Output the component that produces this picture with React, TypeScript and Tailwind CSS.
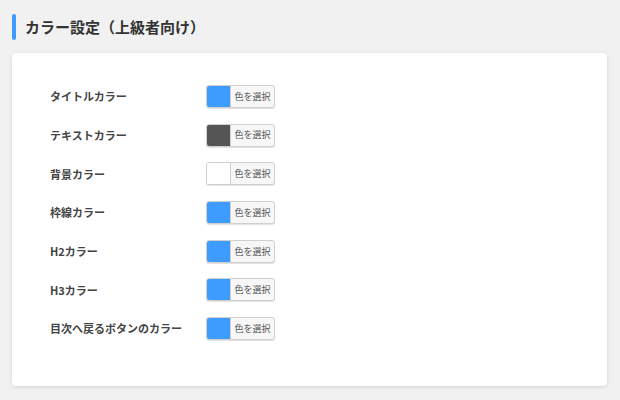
const rows = [
  { label: 'タイトルカラー', color: '#3d9cfe' },
  { label: 'テキストカラー', color: '#555555' },
  { label: '背景カラー', color: '#ffffff' },
  { label: '枠線カラー', color: '#3d9cfe' },
  { label: 'H2カラー', color: '#3d9cfe' },
  { label: 'H3カラー', color: '#3d9cfe' },
  { label: '目次へ戻るボタンのカラー', color: '#3d9cfe' },
]

function ColorButton({ color }: { color: string }) {
  return (
    <button
      type="button"
      className="flex h-[23px] w-[69px] items-stretch overflow-hidden rounded-[3px] border border-[#d0d0d0] bg-[#f7f7f7] shadow-[0_1px_0_#e3e3e3]"
    >
      <span className="w-[24px] border-r border-[#d0d0d0]" style={{ backgroundColor: color }} />
      <span className="flex flex-1 items-center justify-center text-[9px] text-[#555]">色を選択</span>
    </button>
  )
}

export default function App() {
  return (
    <div
      className="h-[400px] w-[620px] bg-[#f1f1f1] px-[12px] pt-[14px] text-[#333]"
      style={{ fontFamily: '"Noto Sans CJK JP", "Noto Sans", sans-serif' }}
    >
      <div className="flex h-[26px] items-center">
        <span className="h-[26px] w-[4px] rounded-full bg-[#3d9cfe]" />
        <h2 className="ml-[9px] text-[15px] font-bold text-[#333]">カラー設定（上級者向け）</h2>
      </div>
      <div className="mt-[13px] h-[333px] w-[595px] rounded-[4px] bg-white px-[38px] pt-[32px] shadow-[0_1px_4px_rgba(0,0,0,0.12)]">
        <div className="flex flex-col gap-[15.7px]">
          {rows.map((r) => (
            <div key={r.label} className="flex items-center">
              <span className="w-[156px] text-[11px] font-bold text-[#444]">{r.label}</span>
              <ColorButton color={r.color} />
            </div>
          ))}
        </div>
      </div>
    </div>
  )
}
